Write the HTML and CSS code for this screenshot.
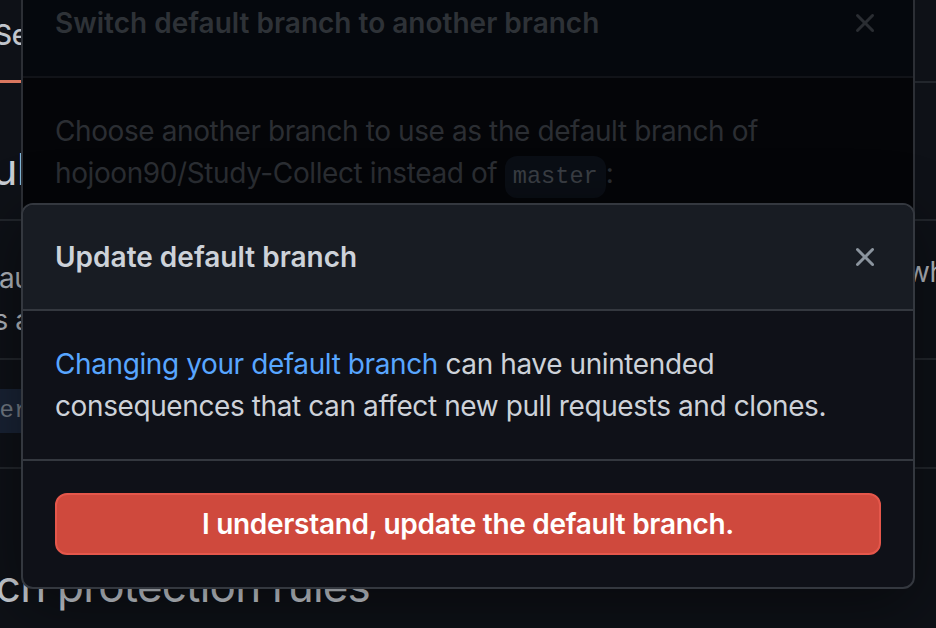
FILE: index.html
```html
<!DOCTYPE html>
<html lang="en">
<head>
<meta charset="utf-8">
<title>Update default branch</title>
<link rel="stylesheet" href="styles.css">
</head>
<body>
<main class="page">
  <nav class="tabs"><span class="tab">Settings</span></nav>
  <section class="subhead"><h2 class="heading heading-default">Default branch</h2></section>
  <section class="desc">
    <p class="desc-text"><span class="desc-l1">automatically made, unless you specify a different branch.</span><span class="desc-l2">is a protected branch</span></p>
    <span class="desc-right">which all pull requests and code commits are made</span>
  </section>
  <section class="branch-row"><code class="branch-name">master</code></section>
  <section class="protect"><h2 class="heading heading-protect">Branch protection rules</h2></section>
</main>

<div class="dialog dialog-back" aria-hidden="true">
  <header class="dialog-header">
    <h3 class="dialog-title">Switch default branch to another branch</h3>
    <svg class="close" viewBox="0 0 16 16" width="32" height="32"><path d="M3.72 3.72a.75.75 0 0 1 1.06 0L8 6.94l3.22-3.22a.749.749 0 0 1 1.275.326.749.749 0 0 1-.215.734L9.06 8l3.22 3.22a.749.749 0 0 1-.326 1.275.749.749 0 0 1-.734-.215L8 9.06l-3.22 3.22a.751.751 0 0 1-1.042-.018.751.751 0 0 1-.018-1.042L6.94 8 3.72 4.78a.75.75 0 0 1 0-1.06Z"/></svg>
  </header>
  <div class="dialog-body">
    <p>Choose another branch to use as the default branch of hojoon90/Study-Collect instead of <code class="code">master</code>:</p>
  </div>
</div>

<div class="dialog dialog-front" role="dialog">
  <header class="dialog-header">
    <h3 class="dialog-title">Update default branch</h3>
    <svg class="close" viewBox="0 0 16 16" width="32" height="32"><path d="M3.72 3.72a.75.75 0 0 1 1.06 0L8 6.94l3.22-3.22a.749.749 0 0 1 1.275.326.749.749 0 0 1-.215.734L9.06 8l3.22 3.22a.749.749 0 0 1-.326 1.275.749.749 0 0 1-.734-.215L8 9.06l-3.22 3.22a.751.751 0 0 1-1.042-.018.751.751 0 0 1-.018-1.042L6.94 8 3.72 4.78a.75.75 0 0 1 0-1.06Z"/></svg>
  </header>
  <div class="dialog-body">
    <p><a class="link" href="#">Changing your default branch</a> can have unintended consequences that can affect new pull requests and clones.</p>
  </div>
  <footer class="dialog-footer">
    <button class="btn-danger" type="button">I understand, update the default branch.</button>
  </footer>
</div>
</body>
</html>
```

FILE: styles.css
```css
* { box-sizing: border-box; }
html, body {
  margin: 0;
  width: 936px;
  height: 628px;
  overflow: hidden;
  background: #0e1117;
  font-family: Inter, "Liberation Sans", sans-serif;
  color: #c9ced5;
}
body { position: relative; }

/* ---------- background page ---------- */
.page {
  display: flex;
  flex-direction: column;
  width: 936px;
}
.tabs {
  display: flex;
  align-items: flex-end;
  height: 83px;
  box-shadow: inset 0 -2px 0 #22262c;
}
.tab {
  margin-left: -38px;
  padding: 14px 32px 24px;
  font-size: 28px;
  line-height: 42px;
  font-weight: 500;
  letter-spacing: -0.4px;
  color: #c0c5cc;
  border-bottom: 3px solid #d9775f;
  white-space: nowrap;
}
.heading {
  margin: 0;
  font-size: 44px;
  line-height: 56px;
  font-weight: 400;
  letter-spacing: -0.8px;
  color: #c9ced5;
  white-space: nowrap;
}
.heading-default { margin-left: -103px; }
.heading-protect { margin-left: -97px; }
.subhead {
  padding: 58px 0 22px;
  border-bottom: 2px solid #22262c;
}
.desc {
  display: flex;
  justify-content: space-between;
  height: 139px;
  border-bottom: 2px solid #22262c;
}
.desc-text {
  margin: 36px 0 0 -1px;
  display: flex;
  flex-direction: column;
  font-size: 28px;
  line-height: 42px;
  letter-spacing: -0.4px;
  color: #b3b8bf;
  white-space: nowrap;
}
.desc-l2 { margin-left: -12px; }
.desc-right {
  margin-top: 30px;
  width: 29px;
  font-size: 28px;
  line-height: 42px;
  letter-spacing: -0.4px;
  color: #b3b8bf;
  white-space: nowrap;
}
.branch-row {
  height: 109px;
  padding-top: 29px;
  border-bottom: 2px solid #22262c;
}
.branch-name {
  display: inline-block;
  margin-left: -80px;
  padding: 0 16px 0 22px;
  height: 44px;
  line-height: 44px;
  font-family: "Liberation Mono", "DejaVu Sans Mono", monospace;
  font-size: 24px;
  color: #737b85;
  background: #192335;
  border-radius: 8px;
}
.protect { padding-top: 89px; }

/* ---------- dialogs ---------- */
.dialog {
  position: absolute;
  left: 21px;
  width: 894px;
  border: 2px solid #34383f;
  border-radius: 12px;
  overflow: hidden;
}
.dialog-header {
  display: flex;
  align-items: center;
  justify-content: space-between;
  height: 108px;
  padding: 0 32px;
  border-bottom: 2px solid #34383f;
}
.dialog-title {
  margin: 0;
  font-size: 28px;
  line-height: 40px;
  font-weight: 600;
}
.close { display: block; fill: #8b949e; }
.dialog-body { padding: 32px; }
.dialog-body p {
  margin: 0;
  font-size: 28px;
  line-height: 42px;
  letter-spacing: -0.4px;
}
.dialog-footer { padding: 32px; }

.dialog-back {
  top: -32px;
  height: 300px;
  background: #040508;
  border-color: #2c2f35;
}
.dialog-back .dialog-header {
  height: 108px;
  background: #05080d;
  border-bottom-color: #111318;
}
.dialog-back .dialog-title { color: #2e3237; }
.dialog-back .close { fill: #2a2d32; }
.dialog-back .dialog-body p { color: #2b2e33; }
.code {
  display: inline-block;
  padding: 0 8px;
  line-height: 42px;
  font-family: "Liberation Mono", "DejaVu Sans Mono", monospace;
  font-size: 23.6px;
  letter-spacing: 0;
  color: #3a3e44;
  background: #0a0e15;
  border-radius: 12px;
}

.dialog-front {
  top: 203px;
  background: #0f1118;
  box-shadow: 0 16px 64px rgba(0, 0, 0, 0.45);
}
.dialog-front .dialog-header {
  height: 106px;
  background: #181c23;
}
.dialog-front .dialog-title { color: #cdd2d9; }
.dialog-front .dialog-body p { color: #cdd2d9; }
.dialog-front .dialog-body { border-bottom: 2px solid #34383f; }
.link { color: #58a6ff; text-decoration: none; }
.btn-danger {
  display: block;
  width: 100%;
  height: 62px;
  padding: 0;
  font-family: inherit;
  font-size: 28px;
  font-weight: 600;
  letter-spacing: -0.3px;
  color: #ffffff;
  background: #cf493d;
  border: 2px solid #e5574b;
  border-radius: 12px;
}
```
